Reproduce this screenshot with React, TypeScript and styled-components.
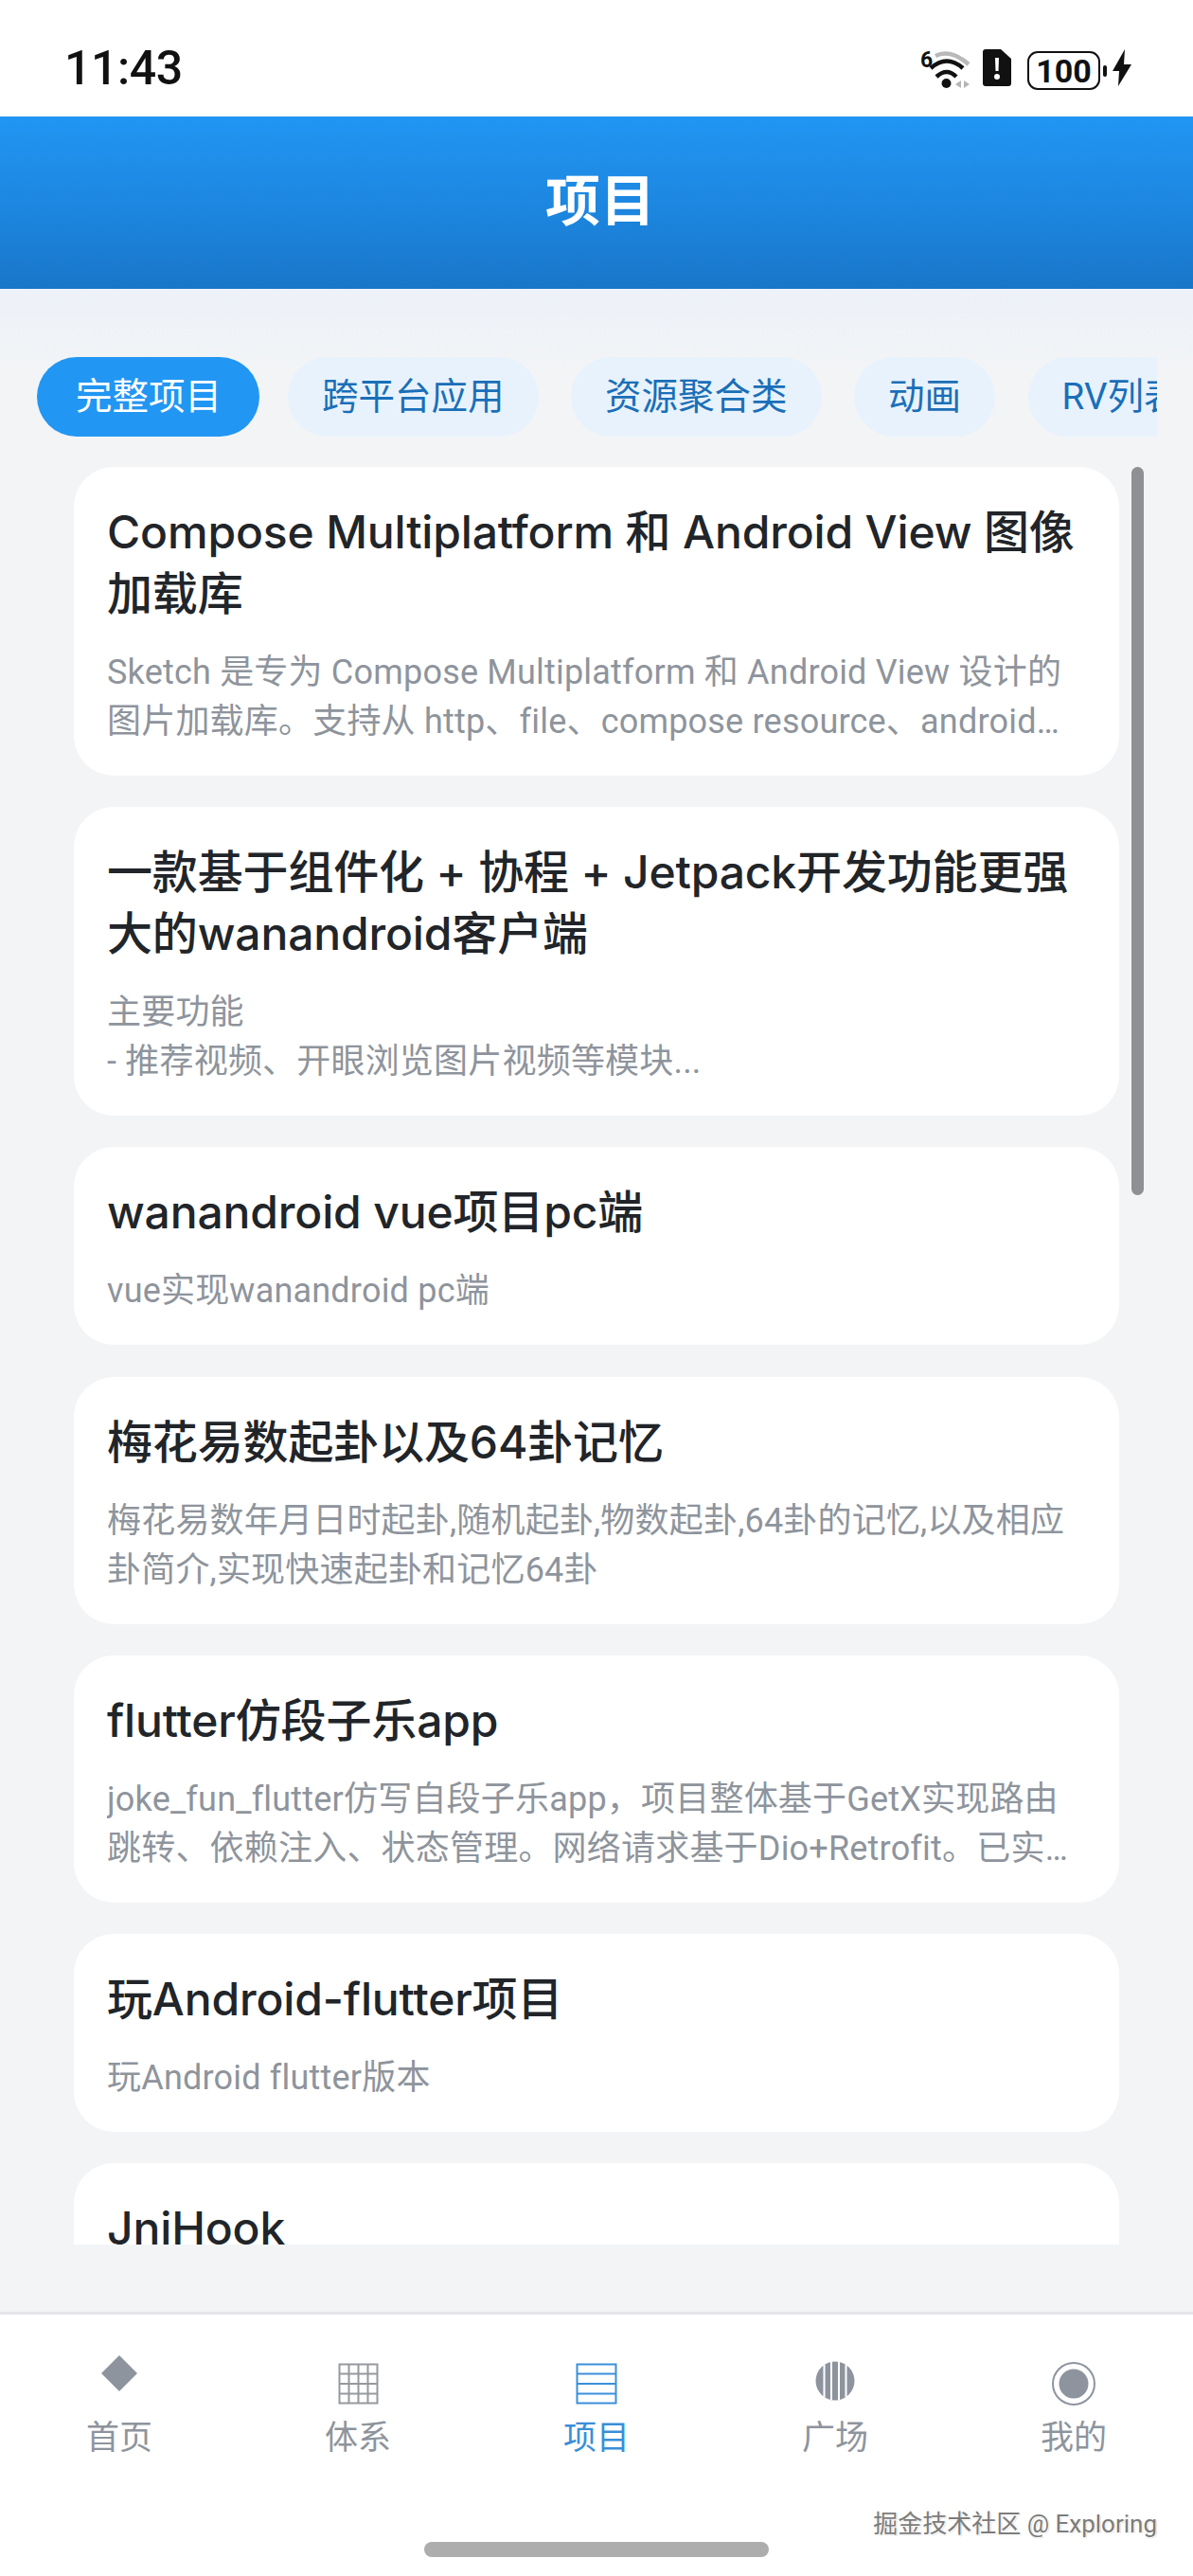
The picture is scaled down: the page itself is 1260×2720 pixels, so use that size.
import React from "react";
import styled, { createGlobalStyle } from "styled-components";

const GlobalStyle = createGlobalStyle`
  html, body {
    margin: 0;
    padding: 0;
    background: #fff;
  }
  * {
    box-sizing: border-box;
  }
`;

const FONT = `Roboto, "Noto Sans CJK SC", sans-serif`;

const tabs = ["完整项目", "跨平台应用", "资源聚合类", "动画", "RV列表动效"];

const projects = [
  {
    title: "Compose Multiplatform 和 Android View 图像加载库",
    desc: "Sketch 是专为 Compose Multiplatform 和 Android View 设计的图片加载库。支持从 http、file、compose resource、android asset/content/resource、base64 等来源加载图片",
  },
  {
    title: "一款基于组件化 + 协程 + Jetpack开发功能更强大的wanandroid客户端",
    desc: "主要功能\n- 推荐视频、开眼浏览图片视频等模块...",
  },
  {
    title: "wanandroid vue项目pc端",
    desc: "vue实现wanandroid pc端",
  },
  {
    title: "梅花易数起卦以及64卦记忆",
    desc: "梅花易数年月日时起卦,随机起卦,物数起卦,64卦的记忆,以及相应卦简介,实现快速起卦和记忆64卦",
  },
  {
    title: "flutter仿段子乐app",
    desc: "joke_fun_flutter仿写自段子乐app，项目整体基于GetX实现路由跳转、依赖注入、状态管理。网络请求基于Dio+Retrofit。已实现首页、发现、我的等页面功能",
  },
  {
    title: "玩Android-flutter项目",
    desc: "玩Android flutter版本",
  },
  {
    title: "JniHook",
    desc: "JniHook",
  },
];

const GRAY = "#8e949e";
const BLUE = "#3a8fd9";

const HomeIcon = () => (
  <svg width="60" height="60" viewBox="0 0 60 60">
    <path d="M30 3 L49 22 L30 41 L11 22 Z" fill={GRAY} />
  </svg>
);

const SystemIcon = () => (
  <svg width="60" height="60" viewBox="0 0 60 60" fill="none" stroke="#96999d" strokeWidth="2">
    <path d="M10.5 12.5h40v41h-40z" />
    <path d="M20.5 12.5v41M30.5 12.5v41M40.5 12.5v41M10.5 22.5h40M10.5 33h40M10.5 43.5h40" />
  </svg>
);

const ProjectIcon = () => (
  <svg width="60" height="60" viewBox="0 0 60 60" fill="none" stroke={BLUE} strokeWidth="2">
    <path d="M9.5 12.5h41v41h-41z" />
    <path d="M9.5 22.5h41M9.5 33h41M9.5 43.5h41" />
  </svg>
);

const SquareIcon = () => (
  <svg width="60" height="60" viewBox="0 0 60 60">
    <circle cx="30" cy="30" r="20.5" fill={GRAY} />
    <path d="M18.5 13v34M26 10v40M34 10v40M41.5 13v34" stroke="#fff" strokeWidth="2" />
  </svg>
);

const MineIcon = () => (
  <svg width="60" height="60" viewBox="0 0 60 60">
    <circle cx="30" cy="33" r="22" fill="none" stroke={GRAY} strokeWidth="2" />
    <circle cx="30" cy="33" r="15.5" fill={GRAY} />
  </svg>
);

const navItems = [
  { label: "首页", icon: <HomeIcon /> },
  { label: "体系", icon: <SystemIcon /> },
  { label: "项目", icon: <ProjectIcon />, active: true },
  { label: "广场", icon: <SquareIcon /> },
  { label: "我的", icon: <MineIcon /> },
];

const WifiIcon = () => (
  <svg width="56" height="44" viewBox="0 0 56 44">
    <text x="1" y="19" fontFamily="Roboto, sans-serif" fontWeight="700" fontSize="23" fill="#111">
      6
    </text>
    <path d="M17 7 Q33 -1 52 16" fill="none" stroke="#b9b9b9" strokeWidth="4.5" />
    <path d="M12 20 Q29 5 46 20" fill="none" stroke="#111" strokeWidth="4.5" />
    <path d="M18 29 Q29 19 39 29" fill="none" stroke="#111" strokeWidth="4.5" />
    <circle cx="28.5" cy="36" r="5" fill="#111" />
    <path d="M38 37 L44 33 V41 Z M47 33 L53 37 L47 41 Z" fill="#b5b5b5" />
  </svg>
);

const SimIcon = () => (
  <svg width="30" height="39" viewBox="0 0 30 39">
    <path
      d="M3 0 H19 L30 10 V36 Q30 39 27 39 H3 Q0 39 0 36 V3 Q0 0 3 0 Z"
      fill="#111"
    />
    <path d="M13 9 H17 L16.5 23 H13.5 Z" fill="#fff" />
    <circle cx="15" cy="29" r="3" fill="#fff" />
  </svg>
);

const BoltIcon = () => (
  <svg width="20" height="39" viewBox="0 0 20 39">
    <path d="M13 0 L0 23 H7 L6 39 L20 16 H12 Z" fill="#111" />
  </svg>
);

const App = () => {
  return (
    <Page>
      <GlobalStyle />
      <StatusBar>
        <Clock>11:43</Clock>
        <StatusIcons>
          <WifiIcon />
          <SimIcon />
          <BatteryWrap>
            <Battery>100</Battery>
            <BatteryCap />
          </BatteryWrap>
          <BoltIcon />
        </StatusIcons>
      </StatusBar>
      <Header>项目</Header>
      <Content>
        <TabRow>
          {tabs.map((tab, index) => (
            <Tab key={tab} $active={index === 0}>
              {tab}
            </Tab>
          ))}
        </TabRow>
        <List>
          {projects.map((item) => (
            <Card key={item.title}>
              <CardTitle>{item.title}</CardTitle>
              <CardDesc>{item.desc}</CardDesc>
            </Card>
          ))}
        </List>
        <ScrollThumb />
      </Content>
      <BottomNav>
        {navItems.map((item) => (
          <NavItem key={item.label} $active={item.active}>
            <NavIcon>{item.icon}</NavIcon>
            <span>{item.label}</span>
          </NavItem>
        ))}
      </BottomNav>
      <Watermark>掘金技术社区 @ Exploring</Watermark>
      <HomeIndicator />
    </Page>
  );
};

const Page = styled.div`
  position: relative;
  width: 1260px;
  height: 2720px;
  overflow: hidden;
  display: flex;
  flex-direction: column;
  background: #fff;
  font-family: ${FONT};
`;

const StatusBar = styled.div`
  height: 123px;
  flex-shrink: 0;
  display: flex;
  align-items: flex-start;
  justify-content: space-between;
  padding: 0 65px 0 68px;
  background: #fff;
`;

const Clock = styled.div`
  margin-top: 43px;
  font-size: 50px;
  line-height: 58px;
  font-weight: 500;
  color: #111;
  letter-spacing: -0.4px;
`;

const StatusIcons = styled.div`
  display: flex;
  align-items: flex-start;
  gap: 11px;
  margin-top: 52px;
`;

const BatteryWrap = styled.div`
  display: flex;
  align-items: center;
  margin: 2px -5px 0 6px;
`;

const Battery = styled.div`
  width: 77px;
  height: 41px;
  border: 2.5px solid #111;
  border-radius: 11px;
  display: flex;
  align-items: center;
  justify-content: center;
  font-size: 34px;
  font-weight: 700;
  color: #111;
`;

const BatteryCap = styled.div`
  width: 4px;
  height: 12px;
  margin-left: 3px;
  background: #111;
  border-radius: 2px;
`;

const Header = styled.div`
  height: 182px;
  flex-shrink: 0;
  display: flex;
  align-items: center;
  justify-content: center;
  padding: 0 0 12px 8px;
  background: linear-gradient(180deg, #2196f3 0%, #1c84dd 60%, #1976c8 100%);
  color: #fff;
  font-size: 58px;
  font-weight: 700;
`;

const Content = styled.div`
  position: relative;
  flex: 1;
  min-height: 0;
  display: flex;
  flex-direction: column;
  padding-top: 72px;
  padding-bottom: 71px;
  background: linear-gradient(180deg, #edf1f8 0px, #f2f4f6 90px);
`;

const TabRow = styled.div`
  display: flex;
  gap: 34.5px;
  margin: 0 38px 0 39px;
  height: 84px;
  flex-shrink: 0;
  overflow: hidden;
`;

const Tab = styled.div<{ $active?: boolean }>`
  flex-shrink: 0;
  display: flex;
  align-items: center;
  height: 84px;
  border-radius: 42px;
  font-size: 38.5px;
  white-space: nowrap;
  padding: ${(props) => (props.$active ? "0 40px 9px 41px" : "0 36px 9px")};
  margin-right: ${(props) => (props.$active ? "-4.5px" : "0")};
  background: ${(props) => (props.$active ? "#2196f3" : "#e8f2fc")};
  color: ${(props) => (props.$active ? "#fff" : "#1a6fb8")};
`;

const List = styled.div`
  flex: 1;
  min-height: 0;
  margin: 32px 78px 0;
  display: flex;
  flex-direction: column;
  gap: 33.2px;
  overflow: hidden;
`;

const Card = styled.div`
  flex-shrink: 0;
  background: #fff;
  border-radius: 42px;
  padding: 36px 36px 31px 35px;
`;

const CardTitle = styled.div`
  font-family: Inter, "Noto Sans CJK SC", sans-serif;
  font-size: 48px;
  line-height: 65px;
  font-weight: 500;
  letter-spacing: -0.15px;
  color: #212529;
`;

const CardDesc = styled.div`
  margin-top: 25px;
  font-size: 36px;
  line-height: 52px;
  letter-spacing: 0.2px;
  color: #8e949c;
  white-space: pre-line;
  display: -webkit-box;
  -webkit-box-orient: vertical;
  -webkit-line-clamp: 2;
  overflow: hidden;
`;

const ScrollThumb = styled.div`
  position: absolute;
  top: 188px;
  right: 52px;
  width: 13px;
  height: 769px;
  border-radius: 7px;
  background: #8e9094;
`;

const BottomNav = styled.div`
  height: 279px;
  flex-shrink: 0;
  display: grid;
  grid-template-columns: repeat(5, 252px);
  align-items: start;
  border-top: 3px solid #e4e6e9;
  background: #fff;
  padding-top: 40px;
`;

const NavItem = styled.div<{ $active?: boolean }>`
  display: flex;
  flex-direction: column;
  align-items: center;
  font-size: 35px;
  line-height: 46px;
  color: ${(props) => (props.$active ? BLUE : "#8e949c")};
`;

const NavIcon = styled.div`
  width: 60px;
  height: 60px;
  margin-bottom: 8px;
`;

const Watermark = styled.div`
  position: absolute;
  right: 38px;
  top: 2648px;
  font-size: 26px;
  line-height: 34px;
  color: #7c7c7c;
  text-shadow: 1px 1px 0 #fff, 1px 1px 1px #999;
`;

const HomeIndicator = styled.div`
  position: absolute;
  left: 448px;
  top: 2684px;
  width: 364px;
  height: 16px;
  border-radius: 8px;
  background: #adadad;
`;

export default App;
